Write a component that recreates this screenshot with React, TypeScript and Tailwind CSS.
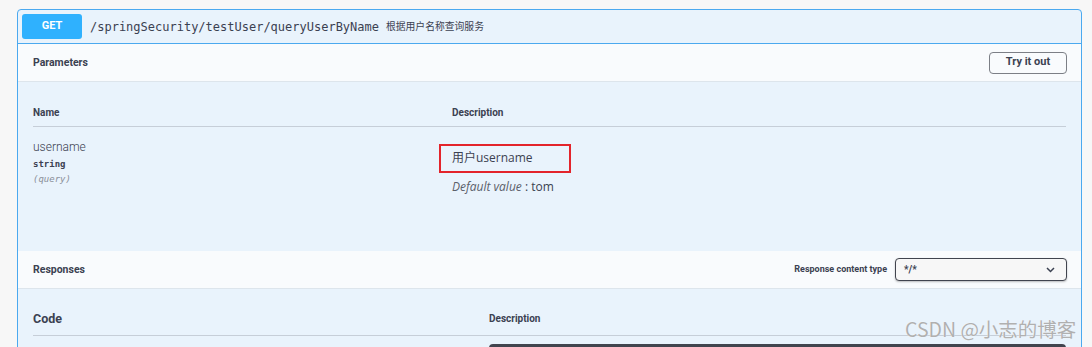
import React from "react";

const sans = "font-['Roboto','Noto_Sans_CJK_SC',sans-serif]";
const mono = "font-['DejaVu_Sans_Mono','Liberation_Mono',monospace]";

export default function App() {
  return (
    <div className={`relative h-[347px] overflow-hidden bg-[#f7f7f7] pt-[9px] pl-[17px] ${sans} text-[#3b4151]`}>
      <div className="w-[1065px] h-[360px] rounded-[4px] border border-[#4ba9ef] bg-[#e9f3fc]">
        {/* header */}
        <div className="flex h-[34px] items-center border-b border-[#4ba9ef] pl-[4px]">
          <div className="flex h-[25px] w-[60px] items-center justify-center rounded-[3px] bg-[#2fb1fe] text-[11px] font-bold text-white">
            GET
          </div>
          <span className={`ml-[8px] text-[12px] ${mono} text-[#3b4151]`}>
            /springSecurity/testUser/queryUserByName
          </span>
          <span className="ml-[7px] text-[9.8px] font-['Noto_Sans_CJK_SC',sans-serif] text-[#3b4151]">
            根据用户名称查询服务
          </span>
        </div>

        {/* parameters header */}
        <div className="flex h-[38px] items-center justify-between border-b border-[#dde5ec] bg-[#f9fbfd] pl-[15px] pr-[14px]">
          <span className="text-[10.5px] font-bold">Parameters</span>
          <button className="flex h-[22px] w-[78px] items-center justify-center rounded-[4px] border border-[#7c7f86] bg-transparent text-[11px] font-bold text-[#3b4151]">
            Try it out
          </button>
        </div>

        {/* parameters table */}
        <div className="h-[169px] px-[15px] pt-[16px]">
          <div className="flex h-[29px] items-center border-b border-[#c6ced8] text-[10px] font-bold">
            <div className="w-[419px]">Name</div>
            <div>Description</div>
          </div>
          <div className="flex pt-[12px]">
            <div className="w-[419px]">
              <div className="text-[12px] leading-[16px] font-light text-[#3b4151]">username</div>
              <div className={`mt-[3px] text-[9px] leading-[12px] font-bold ${mono}`}>string</div>
              <div className={`mt-[3px] text-[9px] leading-[12px] italic text-[#8a8f99] ${mono}`}>(query)</div>
            </div>
            <div className="pt-[11px]">
              <div className="relative text-[12px] leading-[16px]">
                <span className="font-['Open_Sans','Noto_Sans_CJK_SC',sans-serif]">用户username</span>
                <div className="absolute left-[-13px] top-[-6px] h-[29px] w-[132px] border-2 border-[#e3242b]"></div>
              </div>
              <div className="mt-[13px] text-[12px] leading-[16px] font-['Open_Sans',sans-serif]">
                <i className="text-[#5b606b]">Default value</i> : tom
              </div>
            </div>
          </div>
        </div>

        {/* responses header */}
        <div className="flex h-[38px] items-center justify-between border-b border-[#dde5ec] bg-[#f9fbfd] pl-[15px] pr-[14px]">
          <span className="text-[10.5px] font-bold">Responses</span>
          <div className="flex items-center">
            <span className="mr-[8px] text-[9px] font-bold">Response content type</span>
            <div className="flex h-[23px] w-[172px] items-center justify-between rounded-[4px] border border-[#41444e] bg-[#f7f7f7] pl-[8px] pr-[11px] shadow-[0_1px_2px_rgba(0,0,0,0.25)]">
              <span className="text-[10px] font-bold">*/*</span>
              <svg width="9" height="6" viewBox="0 0 9 6">
                <path d="M1 1l3.5 3.5L8 1" fill="none" stroke="#3b4151" strokeWidth="1.5" />
              </svg>
            </div>
          </div>
        </div>

        {/* responses table */}
        <div className="px-[15px]">
          <div className="flex border-b border-[#c6ced8] pt-[22px] pb-[8px] leading-[16px]">
            <div className="w-[456px] text-[12.5px] font-bold">Code</div>
            <div className="text-[10px] font-bold">Description</div>
          </div>
          <div className="ml-[456px] mt-[8px] h-[20px] w-[577px] rounded-t-[4px] bg-[#41444e]"></div>
        </div>
      </div>

      <div className="absolute left-[905px] top-[316px] text-[19.5px] leading-[26px] text-[#b0b0b0] font-['Noto_Sans_CJK_SC',sans-serif] [text-shadow:0_0_1px_#fff]">
        CSDN @小志的博客
      </div>
    </div>
  );
}
